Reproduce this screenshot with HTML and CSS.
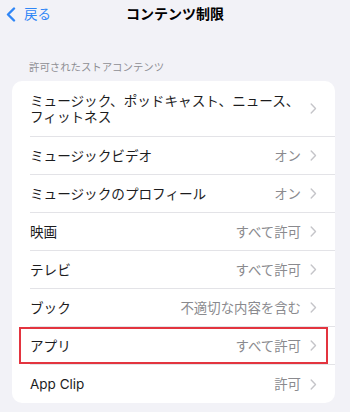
FILE: index.html
```html
<!DOCTYPE html>
<html lang="ja">
<head>
<meta charset="utf-8">
<link rel="stylesheet" href="styles.css">
</head>
<body>
<header class="nav">
  <div class="back">
    <svg class="back-icon" width="10" height="15" viewBox="0 0 10 15"><path d="M8 1.5 L2 7.5 L8 13.5" fill="none" stroke="#2f86f6" stroke-width="2.4" stroke-linecap="round" stroke-linejoin="round"/></svg>
    <span>戻る</span>
  </div>
  <div class="title">コンテンツ制限</div>
  <div></div>
</header>
<div class="section-header">許可されたストアコンテンツ</div>
<div class="card">
  <div class="row"><div class="inner tall"><span class="label">ミュージック、ポッドキャスト、ニュース、<br>フィットネス</span><span class="value"></span><svg class="chev" width="7" height="11" viewBox="0 0 7 11"><path d="M1.2 1 L5.5 5.5 L1.2 10" fill="none" stroke="#c5c5c9" stroke-width="1.4" stroke-linecap="round" stroke-linejoin="round"/></svg></div></div>
  <div class="row"><div class="inner"><span class="label">ミュージックビデオ</span><span class="value">オン</span><svg class="chev" width="7" height="11" viewBox="0 0 7 11"><path d="M1.2 1 L5.5 5.5 L1.2 10" fill="none" stroke="#c5c5c9" stroke-width="1.4" stroke-linecap="round" stroke-linejoin="round"/></svg></div></div>
  <div class="row"><div class="inner"><span class="label">ミュージックのプロフィール</span><span class="value">オン</span><svg class="chev" width="7" height="11" viewBox="0 0 7 11"><path d="M1.2 1 L5.5 5.5 L1.2 10" fill="none" stroke="#c5c5c9" stroke-width="1.4" stroke-linecap="round" stroke-linejoin="round"/></svg></div></div>
  <div class="row"><div class="inner"><span class="label">映画</span><span class="value">すべて許可</span><svg class="chev" width="7" height="11" viewBox="0 0 7 11"><path d="M1.2 1 L5.5 5.5 L1.2 10" fill="none" stroke="#c5c5c9" stroke-width="1.4" stroke-linecap="round" stroke-linejoin="round"/></svg></div></div>
  <div class="row"><div class="inner"><span class="label">テレビ</span><span class="value">すべて許可</span><svg class="chev" width="7" height="11" viewBox="0 0 7 11"><path d="M1.2 1 L5.5 5.5 L1.2 10" fill="none" stroke="#c5c5c9" stroke-width="1.4" stroke-linecap="round" stroke-linejoin="round"/></svg></div></div>
  <div class="row"><div class="inner"><span class="label">ブック</span><span class="value">不適切な内容を含む</span><svg class="chev" width="7" height="11" viewBox="0 0 7 11"><path d="M1.2 1 L5.5 5.5 L1.2 10" fill="none" stroke="#c5c5c9" stroke-width="1.4" stroke-linecap="round" stroke-linejoin="round"/></svg></div></div>
  <div class="row highlighted"><div class="inner"><span class="label">アプリ</span><span class="value">すべて許可</span><svg class="chev" width="7" height="11" viewBox="0 0 7 11"><path d="M1.2 1 L5.5 5.5 L1.2 10" fill="none" stroke="#c5c5c9" stroke-width="1.4" stroke-linecap="round" stroke-linejoin="round"/></svg></div><div class="mark"></div></div>
  <div class="row"><div class="inner"><span class="label latin">App Clip</span><span class="value">許可</span><svg class="chev" width="7" height="11" viewBox="0 0 7 11"><path d="M1.2 1 L5.5 5.5 L1.2 10" fill="none" stroke="#c5c5c9" stroke-width="1.4" stroke-linecap="round" stroke-linejoin="round"/></svg></div></div>
</div>
</body>
</html>
```

FILE: styles.css
```css
* { box-sizing: border-box; }
html, body {
  margin: 0;
  padding: 0;
  background: #f2f2f7;
  font-family: Inter, "Noto Sans CJK JP", sans-serif;
  color: #1c1c1e;
  width: 350px;
  height: 412px;
  overflow: hidden;
}
.nav {
  height: 28px;
  display: grid;
  grid-template-columns: 1fr auto 1fr;
  align-items: center;
}
.back {
  display: flex;
  align-items: center;
  gap: 8px;
  padding-left: 6px;
  color: #2f86f6;
  font-size: 13.5px;
  line-height: 16px;
}
.back-icon { display: block; }
.title {
  font-weight: 700;
  font-size: 14px;
  line-height: 16px;
  color: #000;
}
.section-header {
  margin-top: 33px;
  padding-left: 29px;
  font-size: 10.4px;
  line-height: 14px;
  color: #8e8e93;
}
.card {
  margin: 6px 15px 0 12px;
  background: #fff;
  border-radius: 10px;
}
.row {
  position: relative;
  padding-left: 18px;
}
.inner {
  display: flex;
  align-items: center;
  height: 38px;
  padding-right: 18px;
  border-bottom: 1px solid #e3e3e7;
}
.row:last-child .inner { border-bottom: none; }
.inner.tall {
  height: 56px;
}
.label {
  flex: 1;
  font-size: 13.6px;
  line-height: 16px;
  color: #1c1c1e;
}
.label.latin { font-size: 13.5px; }
.value {
  font-size: 13.4px;
  line-height: 16px;
  color: #8a8a8e;
  margin-right: 9px;
}
.chev { display: block; flex: none; }
.mark {
  position: absolute;
  left: 7px;
  right: 7px;
  top: 0;
  bottom: 1px;
  border: 2px solid #e3343f;
  pointer-events: none;
}
```
